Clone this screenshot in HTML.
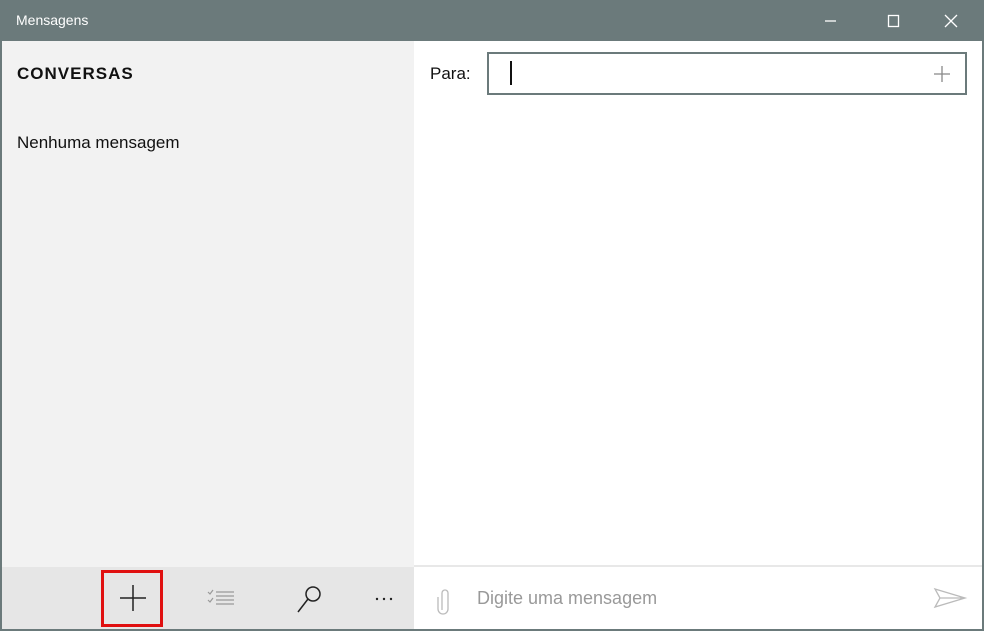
<!DOCTYPE html>
<html><head><style>
body{margin:0;width:984px;height:631px;overflow:hidden;font-family:"Liberation Sans",sans-serif;background:#6b7a7b;position:relative}
.t{position:absolute;left:16px;top:12px;color:#fff;font-size:14px}
.left{position:absolute;left:2px;top:41px;width:412px;height:526px;background:#f2f2f2}
.lbar{position:absolute;left:2px;top:567px;width:412px;height:62px;background:#e6e6e6}
.right{position:absolute;left:414px;top:41px;width:568px;height:588px;background:#fff}
</style></head><body>
<div class="t">Mensagens</div>
<svg style="position:absolute;left:820px;top:10px" width="150" height="22" fill="none" stroke="#fff" stroke-width="1.3">
<line x1="5" y1="11" x2="16" y2="11"/><rect x="68.5" y="5.5" width="10" height="11"/><path d="M125 5L137 17M137 5L125 17"/></svg>
<div class="left"><div style="position:absolute;left:15px;top:23px;font-weight:bold;font-size:17px;letter-spacing:1px;color:#111">CONVERSAS</div>
<div style="position:absolute;left:15px;top:92px;font-size:17px;color:#111">Nenhuma mensagem</div></div>
<div class="lbar">
<div style="position:absolute;left:99px;top:3px;width:56px;height:51px;border:3px solid #e01010"></div>
<svg style="position:absolute;left:0;top:0" width="412" height="62" fill="none" stroke="#222" stroke-width="1.5">
<path d="M131 18V44M118 31H144"/>
<g stroke="#999" stroke-width="1.2"><path d="M206 25l2 2 3-4M206 33l2 2 3-4M214 25H232M214 29H232M214 33H232M214 37H232"/></g>
<circle cx="311" cy="27" r="7"/><path d="M306 32L296 45"/>
<g fill="#222" stroke="none"><circle cx="375" cy="32" r="1.2"/><circle cx="382" cy="32" r="1.2"/><circle cx="389" cy="32" r="1.2"/></g>
</svg></div>
<div class="right">
<div style="position:absolute;left:16px;top:23px;font-size:17px;color:#111">Para:</div>
<div style="position:absolute;left:73px;top:11px;width:476px;height:39px;border:2px solid #6b7a7b"></div>
<div style="position:absolute;left:96px;top:20px;width:2px;height:24px;background:#111"></div>
<svg style="position:absolute;left:518px;top:23px" width="20" height="20" stroke="#888" stroke-width="1.3"><path d="M10 2V18M2 10H18"/></svg>
<div style="position:absolute;left:0;top:524px;width:568px;height:2px;background:#e8e8e8"></div>
<svg style="position:absolute;left:20px;top:544px" width="20" height="30" fill="none" stroke="#bbb" stroke-width="1.3"><path d="M8 25V8a3 3 0 0 1 6 0v16a5 5 0 0 1-10 0V12"/></svg>
<div style="position:absolute;left:63px;top:547px;font-size:18px;color:#999">Digite uma mensagem</div>
<svg style="position:absolute;left:518px;top:545px" width="36" height="24" fill="none" stroke="#bbb" stroke-width="1.3"><path d="M3 3L33 12L3 21L8 12Z M8 12H33"/></svg>
</div>
</body></html>
